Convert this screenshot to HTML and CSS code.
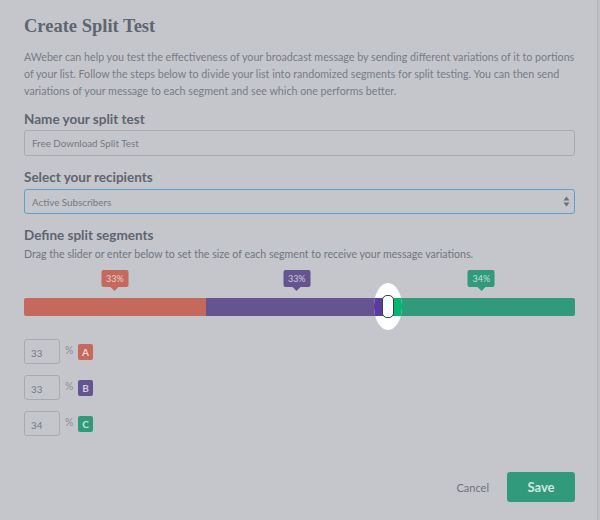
FILE: index.html
```html
<!DOCTYPE html>
<html>
<head>
<meta charset="utf-8">
<link rel="stylesheet" href="styles.css">
</head>
<body>
<div class="modal">
  <h1 class="title">Create Split Test</h1>
  <p class="intro">AWeber can help you test the effectiveness of your broadcast message by sending different variations of it to portions of your list. Follow the steps below to divide your list into randomized segments for split testing. You can then send variations of your message to each segment and see which one performs better.</p>

  <label class="label first">Name your split test</label>
  <div class="input">Free Download Split Test</div>

  <label class="label">Select your recipients</label>
  <div class="select">
    <span>Active Subscribers</span>
    <svg class="arrows" width="7" height="11" viewBox="0 0 7 11"><path d="M3.5 0.5 L6.5 4.5 L0.5 4.5 Z" fill="#6a707a"/><path d="M3.5 10.5 L6.5 6.5 L0.5 6.5 Z" fill="#6a707a"/></svg>
  </div>

  <label class="label">Define split segments</label>
  <p class="hint">Drag the slider or enter below to set the size of each segment to receive your message variations.</p>

  <div class="slider">
    <div class="tip tip-a" style="left:16.5%">33%</div>
    <div class="tip tip-b" style="left:49.5%">33%</div>
    <div class="tip tip-c" style="left:83%">34%</div>
    <div class="bar">
      <div class="seg seg-a" style="width:33%"></div>
      <div class="seg seg-b" style="width:33%"></div>
      <div class="seg seg-c" style="width:34%"></div>
    </div>
    <div class="spot" style="left:66%">
      <div class="spot-bar"><span class="sb-left"></span><span class="sb-right"></span></div>
      <div class="knob"></div>
    </div>
  </div>

  <div class="rows">
    <div class="row"><div class="num">33</div><span class="pct">%</span><span class="badge badge-a">A</span></div>
    <div class="row"><div class="num">33</div><span class="pct">%</span><span class="badge badge-b">B</span></div>
    <div class="row"><div class="num">34</div><span class="pct">%</span><span class="badge badge-c">C</span></div>
  </div>

  <div class="footer">
    <span class="cancel">Cancel</span>
    <span class="save">Save</span>
  </div>
</div>
</body>
</html>
```

FILE: styles.css
```css
html, body {
  margin: 0;
  padding: 0;
}
body {
  width: 600px;
  height: 520px;
  overflow: hidden;
  background: #c0c1c6;
  font-family: Lato, "Liberation Sans", sans-serif;
}
.modal {
  box-sizing: border-box;
  width: 598px;
  height: 520px;
  padding: 12px 22px 0 24px;
  background: #c5c6cb;
  border-right: 1px solid #b6b7bc;
  display: flex;
  flex-direction: column;
}
.title {
  margin: 0;
  font-family: "Liberation Serif", serif;
  font-weight: bold;
  font-size: 18.5px;
  line-height: 28px;
  color: #5d6672;
}
.intro {
  margin: 8px 0 0;
  font-size: 10.7px;
  line-height: 17px;
  color: #767d87;
}
.label {
  display: block;
  margin-top: 13px;
  font-size: 13.5px;
  font-weight: bold;
  line-height: 16px;
  color: #5e6570;
}
.label.first {
  margin-top: 12px;
}
.input, .select {
  box-sizing: border-box;
  margin-top: 3px;
  height: 26px;
  border: 1px solid #a8aaae;
  border-radius: 3px;
  padding: 0 7px;
  display: flex;
  align-items: center;
  font-size: 9.8px;
  color: #737a84;
}
.select {
  margin-top: 4px;
  height: 25px;
  border: 1px solid #5aa0d0;
  justify-content: space-between;
  padding-right: 4px;
}
.hint {
  margin: 4px 0 0;
  font-size: 10.6px;
  line-height: 14px;
  color: #6f7680;
}
.slider {
  position: relative;
  margin-top: 9px;
  height: 46px;
}
.tip {
  position: absolute;
  top: 0;
  transform: translateX(-50%);
  width: 27px;
  height: 17px;
  line-height: 17px;
  border-radius: 2px;
  text-align: center;
  font-size: 9px;
  color: rgba(255, 255, 255, 0.7);
}
.tip::after {
  content: "";
  position: absolute;
  left: 50%;
  bottom: -4px;
  margin-left: -4px;
  border-left: 4px solid transparent;
  border-right: 4px solid transparent;
  border-top: 4px solid currentColor;
}
.tip-a { background: #c4695b; }
.tip-b { background: #64548f; }
.tip-c { background: #319a7a; }
.tip-a::after { border-top-color: #c4695b; }
.tip-b::after { border-top-color: #64548f; }
.tip-c::after { border-top-color: #319a7a; }
.bar {
  position: absolute;
  left: 0;
  right: 0;
  top: 28px;
  height: 18px;
  display: flex;
  border-radius: 2px;
  overflow: hidden;
}
.seg-a { background: #c4695b; }
.seg-b { background: #64548f; }
.seg-c { background: #319a7a; }
.spot {
  position: absolute;
  top: 13px;
  width: 28px;
  height: 47px;
  margin-left: -14px;
  border-radius: 50%;
  background: #ffffff;
  overflow: hidden;
}
.spot-bar {
  position: absolute;
  left: 0;
  right: 0;
  top: 15px;
  height: 18px;
  display: flex;
}
.sb-left { flex: 1; background: #5a3c9e; }
.sb-right { flex: 1; background: #05b672; }
.knob {
  position: absolute;
  left: 8px;
  top: 12px;
  width: 12px;
  height: 23px;
  box-sizing: border-box;
  border: 1px solid #3a3d44;
  border-radius: 5px;
  background: #ffffff;
}
.rows {
  margin-top: 23px;
  display: flex;
  flex-direction: column;
  gap: 11px;
}
.row {
  display: flex;
  align-items: center;
  height: 25px;
}
.num {
  box-sizing: border-box;
  width: 36px;
  height: 25px;
  border: 1px solid #a8aaae;
  border-radius: 3px;
  padding: 2px 0 0 6px;
  display: flex;
  align-items: center;
  font-size: 9.8px;
  color: #737a84;
}
.pct {
  margin-left: 5px;
  width: 13px;
  font-size: 10.5px;
  color: #8a8f97;
  margin-top: -4px;
}
.badge {
  width: 15px;
  height: 16px;
  line-height: 16px;
  border-radius: 2px;
  text-align: center;
  font-size: 10px;
  font-weight: bold;
  color: rgba(255, 255, 255, 0.72);
}
.badge-a { background: #c4695b; }
.badge-b { background: #64548f; }
.badge-c { background: #319a7a; }
.footer {
  margin-top: 36px;
  display: flex;
  justify-content: flex-end;
  align-items: center;
}
.cancel {
  font-size: 11px;
  color: #6d737d;
  margin-right: 18px;
}
.save {
  width: 68px;
  height: 30px;
  line-height: 30px;
  border-radius: 3px;
  background: #319a7a;
  text-align: center;
  font-size: 13px;
  font-weight: bold;
  color: rgba(255, 255, 255, 0.78);
}
```
